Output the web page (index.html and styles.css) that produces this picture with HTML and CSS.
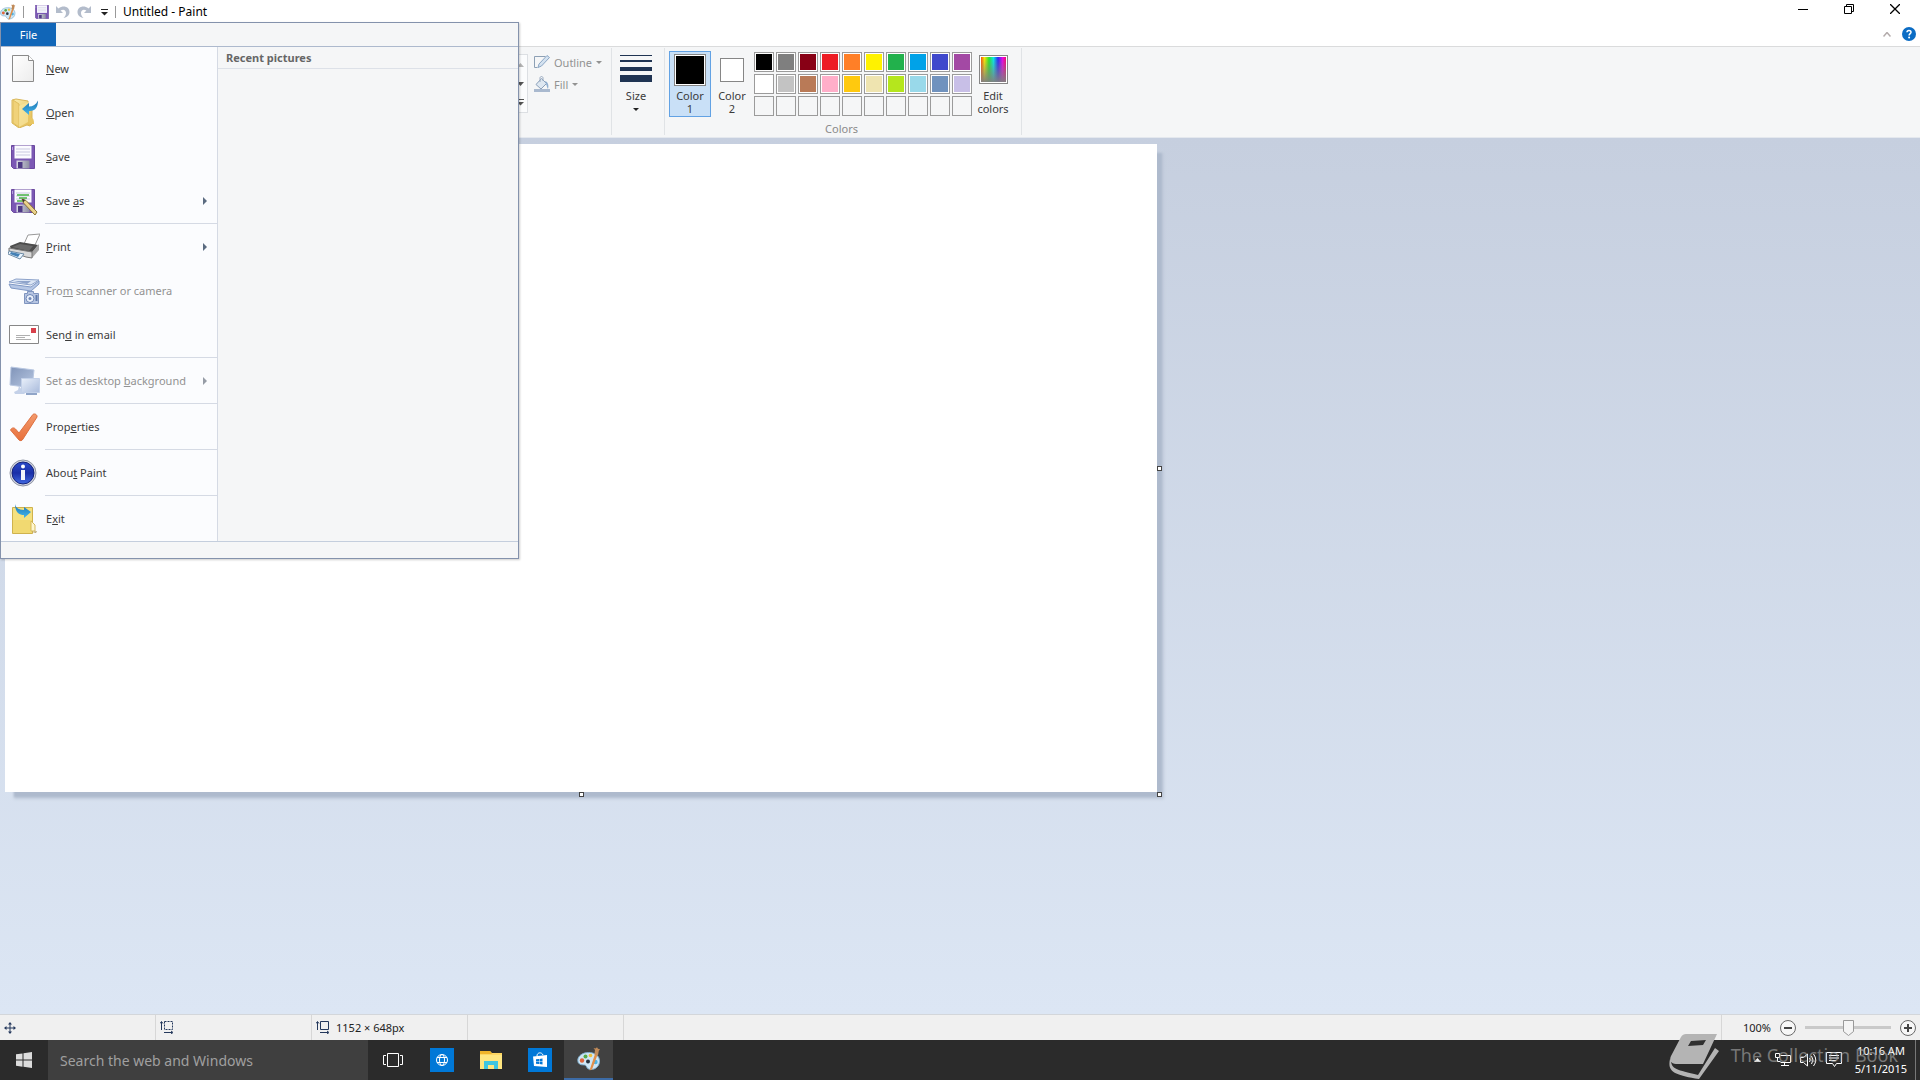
FILE: index.html
```html
<!DOCTYPE html>
<html lang="en">
<head>
    <meta charset="UTF-8">
    <meta name="viewport" content="width=device-width, initial-scale=1.0">
    <title>Untitled - Paint</title>
    <link rel="stylesheet" href="styles.css">
</head>
<body>
    <!-- Shared icon shapes -->
    <svg class="defs" width="0" height="0" aria-hidden="true">
        <defs>
            <linearGradient id="folderFill" x1="0" y1="0" x2="1" y2="1">
                <stop offset="0" stop-color="#fbeeb0"/>
                <stop offset="1" stop-color="#e2b94c"/>
            </linearGradient>
            <linearGradient id="blueArrow" x1="0" y1="0" x2="0" y2="1">
                <stop offset="0" stop-color="#1c74b4"/>
                <stop offset="1" stop-color="#43b6ea"/>
            </linearGradient>
            <linearGradient id="paperFill" x1="0" y1="0" x2="1" y2="1">
                <stop offset="0" stop-color="#ffffff"/>
                <stop offset="1" stop-color="#ececec"/>
            </linearGradient>
            <linearGradient id="metalFill" x1="0" y1="0" x2="1" y2="0">
                <stop offset="0" stop-color="#d9d9e4"/>
                <stop offset="1" stop-color="#8d8da3"/>
            </linearGradient>
            <linearGradient id="screenFill" x1="0" y1="0" x2="1" y2="1">
                <stop offset="0" stop-color="#7f93b8"/>
                <stop offset="1" stop-color="#b8c8e2"/>
            </linearGradient>
            <linearGradient id="paleFill" x1="0" y1="0" x2="1" y2="1">
                <stop offset="0" stop-color="#e9f0fa"/>
                <stop offset="1" stop-color="#a9bbdc"/>
            </linearGradient>
            <linearGradient id="tickFill" x1="0" y1="0" x2="0" y2="1">
                <stop offset="0" stop-color="#f39a6c"/>
                <stop offset="1" stop-color="#e8703c"/>
            </linearGradient>
            <linearGradient id="infoFill" x1="0" y1="0" x2="0" y2="1">
                <stop offset="0" stop-color="#2b4bc9"/>
                <stop offset="0.5" stop-color="#1a2fa8"/>
                <stop offset="1" stop-color="#3f68e0"/>
            </linearGradient>
            <symbol id="floppy" viewBox="0 0 24 24">
                <path d="M0.5 0.5h23v23h-21l-2-2z" fill="#7b58b4" stroke="#6a489f"/>
                <path d="M3.5 0.5h17v13h-17z" fill="#fbfbff"/>
                <path d="M5 4h14M5 7h14M5 10h14" stroke="#c9c9e0"/>
                <path d="M5.500 15.500h13v8h-13z" fill="url(#metalFill)"/>
                <path d="M7 17h4.500v6H7z" fill="#4f3b86"/>
                <path d="M1.500 2v3" stroke="#b79fe0"/>
            </symbol>
            <symbol id="palette" viewBox="0 0 24 24">
                <path d="M11.500 5.500c6 0 11 3 11 8.500 0 5-4 8.500-8.500 8.500-2.500 0-4-1.200-4.500-2.800-.4-1.400-1.500-1.800-3-1.800C3 18 .800 16.500 .800 13.500 .800 9 5.500 5.500 11.500 5.500z" fill="#cfe6f5" stroke="#7fb0d0"/>
                <circle cx="5" cy="13.500" r="2.200" fill="#e0663c"/>
                <circle cx="8.500" cy="9.500" r="2" fill="#54ab4a"/>
                <circle cx="13.500" cy="8.500" r="1.800" fill="#efc03c"/>
                <circle cx="18.500" cy="15" r="2.200" fill="#4fb2e0"/>
                <circle cx="11" cy="14.500" r="2" fill="#27313d"/>
                <path d="M12.500 23.500L18 7l2.500 .8L15 22.500z" fill="#e08f4a"/>
                <path d="M17.400 7.500L18 3l-1.500-2 2 .5L20 .3l1 1.400 2 .5-1.200 1.500-.8 4.500z" fill="#c08a58"/>
            </symbol>
        </defs>
    </svg>

    <div class="window">
        <!-- Title bar -->
        <header class="titlebar">
            <svg class="app-icon" width="16" height="16"><use href="#palette"/></svg>
            <span class="bar-line"></span>
            <button class="quick" aria-label="Save"><svg width="14" height="14"><use href="#floppy"/></svg></button>
            <button class="quick" aria-label="Undo">
                <svg width="14" height="14" viewBox="0 0 14 14"><path d="M0 1v7h7L4.600 5.600C7.500 3.800 10 5.200 10 8c0 2-1 3.600-2.500 5C11 12.500 13.500 10.300 13.500 7 13.500 2 7.500-.3 2.500 3.500z" fill="#b3bccb"/></svg>
            </button>
            <button class="quick" aria-label="Redo">
                <svg width="14" height="14" viewBox="0 0 14 14"><path d="M14 1v7H7l2.400-2.400C6.500 3.800 4 5.200 4 8c0 2 1 3.600 2.500 5C3 12.500 .5 10.300 .5 7 .5 2 6.500-.3 11.500 3.500z" fill="#b3bccb"/></svg>
            </button>
            <button class="quick" aria-label="Customize Quick Access Toolbar">
                <svg width="7" height="7"><path d="M0 .5h7" stroke="#222"/><path d="M0 3h7L3.500 6.500z" fill="#222"/></svg>
            </button>
            <span class="bar-line"></span>
            <h1>Untitled - Paint</h1>
            <div class="window-buttons">
                <button aria-label="Minimize"><svg width="10" height="10"><path d="M0 5.500h10" stroke="#000"/></svg></button>
                <button aria-label="Restore"><svg width="10" height="10"><path d="M.5 2.500h7v7h-7zM2.500 2.500v-2h7v7h-2" fill="none" stroke="#000"/></svg></button>
                <button aria-label="Close"><svg width="10" height="10"><path d="M0 0l10 10M10 0L0 10" stroke="#000" stroke-width="1.300"/></svg></button>
            </div>
        </header>

        <div class="tab-row">
            <button aria-label="Minimize the Ribbon"><svg width="8" height="5"><path d="M.5 4.500l3.500-4 3.500 4" fill="none" stroke="#b3abab" stroke-width="1.500"/></svg></button>
            <button aria-label="Help">
                <svg width="14" height="14" viewBox="0 0 14 14"><circle cx="7" cy="7" r="7" fill="#0b6cc4"/><path d="M5 5.300C5 2.800 9 2.800 9 5.200c0 1.500-1.900 1.500-1.900 3.300" fill="none" stroke="#fff" stroke-width="1.500"/><circle cx="7.100" cy="10.600" r="1" fill="#fff"/></svg>
            </button>
        </div>

        <!-- Ribbon -->
        <section class="ribbon">
            <div class="shapes">
                <div class="gallery-scroll">
                    <button class="faded" aria-label="Row up"><svg width="7" height="4"><path d="M0 4l3.500-4L7 4z" fill="#b5b5b5"/></svg></button>
                    <button aria-label="Row down"><svg width="7" height="4"><path d="M0 0h7L3.500 4z" fill="#555"/></svg></button>
                    <button aria-label="More shapes"><svg width="7" height="7"><path d="M0 .5h7" stroke="#555"/><path d="M0 3h7L3.500 6.500z" fill="#555"/></svg></button>
                </div>
            </div>
            <div class="shape-style">
                <button disabled>
                    <svg width="16" height="14" viewBox="0 0 16 14"><path d="M.5 1.500h11M.5 1.500v11h3" fill="none" stroke="#8da0b5"/><path d="M4 12.500L5 9l8-8.500 2.500 2L7.500 11z" fill="#d4e2f0" stroke="#8ba6c4"/></svg>
                    Outline <i class="caret"></i>
                </button>
                <button disabled>
                    <svg width="16" height="16" viewBox="0 0 16 16"><path d="M0 13h16v3H0z" fill="#a9b9cf"/><path d="M2 8.500L7.500 2.500l5 5-5.500 5.500z" fill="#dde7f1" stroke="#8ba0ba"/><path d="M6 6V2c0-2 3-2 3 0v3" fill="none" stroke="#9aabc0"/><path d="M11 5c3 1 4 4 3 8-1-1-1-3-2-5z" fill="#8faed0"/></svg>
                    Fill <i class="caret"></i>
                </button>
            </div>
            <div class="group size-group">
                <button class="tool">
                    <svg width="32" height="28"><path d="M0 0h32v1H0zM0 5h32v2H0zM0 12h32v4H0zM0 20h32v7H0z" fill="#1f3453"/></svg>
                    <span>Size</span>
                    <i class="caret"></i>
                </button>
            </div>
            <div class="group colors-group">
                <div class="colors-row">
                    <button class="tool color-tool selected"><span class="swatch swatch-primary"></span><span>Color<br>1</span></button>
                    <button class="tool color-tool"><span class="swatch swatch-secondary"></span><span>Color<br>2</span></button>
                    <div class="palette" id="palette-grid"></div>
                    <button class="tool edit-tool"><span class="swatch swatch-spectrum"></span><span>Edit<br>colors</span></button>
                </div>
                <div class="group-label">Colors</div>
            </div>
        </section>

        <!-- Drawing area -->
        <main class="workspace">
            <div class="canvas">
                <span class="handle handle-right"></span>
                <span class="handle handle-bottom"></span>
                <span class="handle handle-corner"></span>
            </div>
        </main>

        <!-- Status bar -->
        <footer class="statusbar">
            <div class="status-cell"><svg width="12" height="12"><path d="M6 1v10M1 6h10" stroke="#24385c"/><path d="M4 2.500L6 0l2 2.500zM4 9.500L6 12l2-2.500zM2.500 4L0 6l2.500 2zM9.500 4L12 6 9.500 8z" fill="#24385c"/></svg></div>
            <div class="status-cell"><svg width="14" height="13"><path d="M4.500 .5h8v8h-8z" fill="none" stroke="#24385c" stroke-dasharray="2 1"/><path d="M1.500 1v8M0 2.500L1.500 .5 3 2.500M4 11.500h8M11 10l2 1.500-2 1.500" fill="none" stroke="#24385c"/></svg></div>
            <div class="status-cell"><svg width="14" height="13"><path d="M4.500 .5h8v8h-8z" fill="none" stroke="#24385c"/><path d="M1.500 1v8M0 2.500L1.500 .5 3 2.500M4 11.500h8M11 10l2 1.500-2 1.500" fill="none" stroke="#24385c"/></svg>1152 × 648px</div>
            <div class="status-cell"></div>
            <div class="zoom">
                <label for="zoom">100%</label>
                <button aria-label="Zoom out"><svg width="16" height="16"><circle cx="8" cy="8" r="7.500" fill="#f7f7f7" stroke="#6a6a6a"/><path d="M4 8h8" stroke="#444" stroke-width="2"/></svg></button>
                <input type="range" id="zoom" min="0" max="100" value="50">
                <button aria-label="Zoom in"><svg width="16" height="16"><circle cx="8" cy="8" r="7.500" fill="#f7f7f7" stroke="#6a6a6a"/><path d="M4 8h8M8 4v8" stroke="#444" stroke-width="2"/></svg></button>
            </div>
        </footer>

        <!-- File menu -->
        <div class="file-menu">
            <div class="file-tabs"><button class="file-tab">File</button></div>
            <div class="file-body">
                <nav class="commands">
                    <button>
                        <svg width="30" height="30"><path d="M4.500 1.500h16l5 5v21h-21z" fill="url(#paperFill)" stroke="#8a8a8a"/><path d="M20.500 1.500v5h5" fill="#fff" stroke="#8a8a8a"/></svg>
                        <span><u>N</u>ew</span>
                    </button>
                    <button>
                        <svg width="30" height="30"><path d="M4 2l4-1 12 2v6l4 3v14l-2 2-3-1-8 3-7-5z" fill="url(#folderFill)" stroke="#d9b659"/><path d="M5 2l6 4v23l-6-4z" fill="#f0d27a" stroke="#dfbd5c"/><path d="M11 8l9-4v20l-9 5z" fill="#f8e6a0" opacity=".7"/><path d="M21 20c4-1 5 1 5 6h-5z" fill="#e8c662"/><path d="M14 11l7-6v3.500c4 0 7-2 9-6 0 7-3 11-9 10.500V17z" fill="url(#blueArrow)"/></svg>
                        <span><u>O</u>pen</span>
                    </button>
                    <button>
                        <svg width="30" height="30"><use href="#floppy" x="3" y="3" width="24" height="24"/></svg>
                        <span><u>S</u>ave</span>
                    </button>
                    <button>
                        <svg width="30" height="30"><use href="#floppy" x="3" y="3" width="24" height="24"/><path d="M9 9h12M11 12h8M9 15h7" stroke="#45b243" stroke-width="1.500"/><path d="M14 13l4 1.500L29 26l-2 3L15.500 17z" fill="#ecd38c" stroke="#8b7434"/><path d="M14 13l3 1-1.500 2.500z" fill="#333"/></svg>
                        <span>Save <u>a</u>s</span><i class="more"></i>
                    </button>
                    <hr>
                    <button>
                        <svg width="32" height="30"><path d="M20 3l12-1-5 11-11-1z" fill="#fff" stroke="#999"/><path d="M2 14l10-4 18 3-6 8-21-3z" fill="#4c4c4c"/><path d="M4 15l8-3 13 2-4 5z" fill="#6a6a6a"/><path d="M24 20l7-8v6l-7 8z" fill="#a5a5a5"/><path d="M1 16l23 4v6l-6-1-17-6z" fill="#d8d8d8" stroke="#777"/><path d="M1 19l15 3-4 5-12-5z" fill="#eaf5ff" stroke="#6c8aa5"/><path d="M3 20l9 2-2 3-8-3z" fill="#4380b5"/></svg>
                        <span><u>P</u>rint</span><i class="more"></i>
                    </button>
                    <button disabled>
                        <svg width="32" height="30"><path d="M1 6l7-3 23 1-8 5z" fill="#dce6f5" stroke="#8ca2ca"/><path d="M1 8l22 3 8-6v3l-8 7L3 12z" fill="#b6c7e5" stroke="#7f98c5"/><path d="M6 5h17l-4 3z" fill="#8fa4cb"/><path d="M16.500 17.500h3v-2h6v2h5v10h-14z" fill="#b6c5e2" stroke="#7f94be"/><circle cx="22" cy="22.500" r="4" fill="#eaf0fa" stroke="#6e86b6"/><circle cx="22" cy="22.500" r="1.500" fill="#6e86b6"/><path d="M28.500 19v6" stroke="#5f78aa" stroke-width="2"/></svg>
                        <span>Fro<u>m</u> scanner or camera</span>
                    </button>
                    <button>
                        <svg width="32" height="30"><path d="M1.500 5.500h29v18h-29z" fill="#fff" stroke="#878787"/><path d="M23 8h5v5h-5z" fill="#d8414c"/><path d="M8 15.500h14M8 17.500h9M8 19.500h15" stroke="#b0b0b0"/></svg>
                        <span>Sen<u>d</u> in email</span>
                    </button>
                    <hr>
                    <button disabled>
                        <svg width="32" height="30"><path d="M3 1l23 3-2 18-22-3z" fill="url(#screenFill)" stroke="#b9c8e2"/><path d="M11 20l-1 4-4 2 1 2h10" fill="#c4d1e8"/><path d="M13.500 12.500h18v14h-18z" fill="url(#paleFill)" stroke="#c3d1e9"/><path d="M18 27h11v2H18z" fill="#90a5c8"/></svg>
                        <span>Set as desktop <u>b</u>ackground</span><i class="more"></i>
                    </button>
                    <hr>
                    <button>
                        <svg width="32" height="30"><path d="M2.500 18c1-2 3-3 5-1l3.500 4L24.500 3c1-2 5-1 4.500 2L15 27c-1 2-3 2-4 1z" fill="url(#tickFill)" stroke="#dd7040"/></svg>
                        <span>Prop<u>e</u>rties</span>
                    </button>
                    <hr>
                    <button>
                        <svg width="30" height="30"><circle cx="15" cy="15" r="13" fill="#d4d7e0" stroke="#8f94a5"/><circle cx="15" cy="15" r="11" fill="url(#infoFill)" stroke="#15237a"/><circle cx="15" cy="8.500" r="2" fill="#fff"/><path d="M13 12h4v10h-4z" fill="#f2f4fb"/></svg>
                        <span>Abou<u>t</u> Paint</span>
                    </button>
                    <hr>
                    <button>
                        <svg width="30" height="30"><path d="M4.500 3.500h20v26h-20z" fill="#f5e17f" stroke="#cfb24d"/><path d="M5 16h19v13H5z" fill="#efd468" opacity=".6"/><path d="M23 17l4 4v6h-4z" fill="#fff7cf" stroke="#d5b95c"/><path d="M24 28l5-1-1 2z" fill="#b8a36c"/><path d="M7 0c1 4 4 6 9 6V3l7 5-7 6v-3c-6 0-9-4-9-11z" fill="url(#blueArrow)"/></svg>
                        <span>E<u>x</u>it</span>
                    </button>
                </nav>
                <section class="recent">
                    <h2>Recent pictures</h2>
                </section>
            </div>
            <div class="file-footer"></div>
        </div>
    </div>

    <!-- Taskbar -->
    <div class="taskbar">
        <button class="start" aria-label="Start"><svg width="16" height="16"><path d="M0 2.300L6.500 1.400v6.200H0zM7.500 1.200L16 0v7.600H7.500zM0 8.500h6.500v6.200L0 13.800zM7.500 8.500H16V16l-8.500-1.200z" fill="#dcdcdc"/></svg></button>
        <input class="search" type="text" aria-label="Search" placeholder="Search the web and Windows">
        <button class="task" aria-label="Task View"><svg width="20" height="14"><path d="M4.500 .5h11v13h-11zM3 2.500H.5v9H3M17 2.500h2.500v9H17" fill="none" stroke="#fff"/></svg></button>
        <button class="task" aria-label="Browser"><svg width="24" height="24"><path d="M0 0h24v24H0z" fill="#0078d7"/><g fill="none" stroke="#fff"><circle cx="12" cy="12" r="5.500"/><ellipse cx="12" cy="12" rx="2.500" ry="5.500"/><path d="M7 9.500h10M7 14.500h10"/></g></svg></button>
        <button class="task" aria-label="File Explorer"><svg width="22" height="20"><path d="M0 1h10l2 2h10v16H0z" fill="#fdd663"/><path d="M0 1h10l2 3H0z" fill="#f0b429"/><path d="M0 5h22v14H0z" fill="#ffe680"/><path d="M4 11h14v8h-4v-4H8v4H4z" fill="#3fc6e0"/></svg></button>
        <button class="task" aria-label="Store"><svg width="24" height="24"><path d="M0 0h24v24H0z" fill="#0078d7"/><path d="M5 8.500l14-1.500v12L6 18z" fill="#fff"/><path d="M9 8c0-4 5-4 6-1" fill="none" stroke="#fff"/><path d="M8 11.300l3-.3v2.300H8zM11.500 11l3-.4v2.700h-3zM8 13.700h3V16l-3-.3zM11.500 13.700h3v2.700l-3-.3z" fill="#0078d7"/></svg></button>
        <button class="task active" aria-label="Paint"><svg width="24" height="24"><use href="#palette"/></svg></button>
        <div class="tray">
            <button class="tray-more" aria-label="Show hidden icons"><svg width="7" height="4"><path d="M0 4l3.500-4L7 4z" fill="#fff"/></svg></button>
            <button aria-label="Network"><svg width="16" height="14"><path d="M5.500 2.500h10v7h-10M9.500 9.500v3M6 12.500h8M.5 .5h4v4h-4zM2.500 4.500v4h3" fill="none" stroke="#fff"/></svg></button>
            <button aria-label="Volume"><svg width="17" height="14"><path d="M.5 4.500h3L7.500 1v12L3.500 9.500h-3zM9.500 5q1.500 2 0 4M11.500 3q3 4 0 8M13.500 1q4.500 6 0 12" fill="none" stroke="#fff"/></svg></button>
            <button aria-label="Notifications"><svg width="16" height="16"><path d="M.5 .5h15v11h-5l-2 3-2-3h-6zM3 3.500h10M3 6h10M3 8.500h7" fill="none" stroke="#fff"/></svg></button>
            <time class="clock">10:16 AM<br>5/11/2015</time>
        </div>
        <div class="watermark">
            <svg width="50" height="46" viewBox="0 0 50 46"><path d="M17 1h31L34 31H7C2 31 0 27 2 23L12 4c1-2 3-3 5-3z" fill="#b4b4b4"/><path d="M22 8l15-1-3 5-15 1z" fill="#303030"/><path d="M2 27c0 9 6 10 27 15l17-27 4 3-20 28C6 42-2 39 1 26z" fill="#b4b4b4"/></svg>
            <span>The Collection Book</span>
        </div>
    </div>

    <script>
        const colors = [
            "#000000", "#7f7f7f", "#880015", "#ed1c24", "#ff7f27", "#fff200", "#22b14c", "#00a2e8", "#3f48cc", "#a349a4",
            "#ffffff", "#c3c3c3", "#b97a57", "#ffaec9", "#ffc90e", "#efe4b0", "#b5e61d", "#99d9ea", "#7092be", "#c8bfe7"
        ];
        const grid = document.getElementById("palette-grid");

        // Two rows of preset colors and one row of empty slots
        for (let i = 0; i < 30; i++) {
            const cell = document.createElement("button");
            cell.className = i < 20 ? "color" : "color empty";
            cell.setAttribute("aria-label", colors[i] || "Custom color");
            if (colors[i]) {
                cell.style.backgroundColor = colors[i];
            }
            grid.appendChild(cell);
        }
    </script>
</body>
</html>
```
FILE: styles.css
```css
* {
    box-sizing: border-box;
}

body {
    margin: 0;
    height: 100vh;
    display: flex;
    flex-direction: column;
    overflow: hidden;
    font-family: "Noto Sans", "Open Sans", sans-serif;
    font-size: 11px;
    line-height: 13px;
    color: #3b3b3b;
}

button {
    display: flex;
    align-items: center;
    justify-content: center;
    padding: 0;
    border: none;
    background: none;
    font: inherit;
    color: inherit;
}

svg {
    display: block;
    flex: none;
}

.defs {
    position: absolute;
}

.window {
    position: relative;
    flex: 1;
    min-height: 0;
    display: flex;
    flex-direction: column;
    background: #fff;
}

/* Title bar */
.titlebar {
    height: 22px;
    display: flex;
    align-items: center;
    flex: none;
    padding-top: 2px;
}

.titlebar h1 {
    margin: 0;
    font-size: 12px;
    line-height: 20px;
    font-weight: normal;
    color: #000;
}

.bar-line {
    width: 1px;
    height: 12px;
    margin: 0 7px;
    background: #999;
}

.quick {
    width: 21px;
    height: 20px;
}

.quick + .bar-line {
    margin-left: 0;
}

.window-buttons {
    display: flex;
    align-self: flex-start;
    margin-left: auto;
    padding-right: 2px;
}

.window-buttons button {
    width: 46px;
    height: 14px;
}

.tab-row {
    height: 24px;
    flex: none;
    display: flex;
    justify-content: flex-end;
    align-items: center;
    gap: 11px;
    padding-right: 4px;
}

/* Ribbon */
.ribbon {
    height: 92px;
    flex: none;
    display: flex;
    background: #f5f6f7;
    border-top: 1px solid #dadbdc;
    border-bottom: 1px solid #e4e8ee;
}

.shapes {
    width: 528px;
    display: flex;
    justify-content: flex-end;
    align-items: flex-start;
    padding-top: 7px;
}

.gallery-scroll {
    width: 15px;
    border: 1px solid #dcdfe3;
    background: #fbfcfd;
}

.gallery-scroll button {
    width: 13px;
    height: 19px;
}

.shape-style {
    width: 83px;
    padding: 4px 0 0 6px;
}

.shape-style button {
    height: 22px;
    gap: 4px;
    color: #929292;
}

.caret {
    border: 3px solid transparent;
    border-top-color: currentColor;
    border-bottom: 0;
}

.group {
    border-left: 1px solid #e0e3e6;
    margin: 1px 0 2px;
}

.size-group {
    width: 53px;
    padding: 7px 8px;
}

.tool {
    flex-direction: column;
    justify-content: flex-start;
}

.size-group .tool {
    width: 32px;
    gap: 6px;
}

.size-group .caret {
    color: #222;
}

.colors-group {
    border-right: 1px solid #e0e3e6;
    padding: 3px 7px 0 4px;
}

.colors-row {
    display: flex;
    height: 66px;
}

.color-tool {
    width: 42px;
    height: 66px;
    padding: 2px 0 1px;
    justify-content: space-between;
    border: 1px solid transparent;
}

.color-tool.selected {
    background: #c9e0f7;
    border-color: #62a2e4;
}

.swatch {
    display: block;
    border: 1px solid #868686;
    background: #fff;
}

.swatch-primary {
    width: 32px;
    height: 32px;
    background: #000;
    box-shadow: inset 0 0 0 1px #fff;
}

.swatch-secondary {
    width: 24px;
    height: 24px;
    margin-top: 4px;
}

.swatch-spectrum {
    width: 29px;
    height: 29px;
    background:
        linear-gradient(to bottom, transparent, #808080),
        linear-gradient(to right, #f20, #fe0, #2e2, #0ee, #22f, #e0e, #f04);
    box-shadow: inset 0 0 0 1px #fff;
}

.palette {
    display: grid;
    grid-template-columns: repeat(10, 20px);
    grid-auto-rows: 20px;
    gap: 2px;
    padding: 1px 0 0 1px;
}

.color {
    border: 1px solid #9b9b9b;
    box-shadow: inset 0 0 0 1px #fff;
}

.color.empty {
    box-shadow: none;
}

.edit-tool {
    width: 42px;
    padding-top: 4px;
    gap: 5px;
}

.group-label {
    padding-top: 5px;
    text-align: center;
    color: #8b8b8b;
}

/* Drawing area */
.workspace {
    flex: 1;
    min-height: 0;
    padding: 6px 5px;
    background: linear-gradient(#c6cfdf, #dce6f4);
}

.canvas {
    position: relative;
    width: 1152px;
    height: 648px;
    background: #fff;
    box-shadow: 7px 7px 2px -2px #aebacd, 8px 8px 3px -1px #c0cada;
}

.handle {
    position: absolute;
    width: 5px;
    height: 5px;
    border: 1px solid #444;
    background: #fff;
}

.handle-right {
    left: 100%;
    top: 50%;
    margin-top: -2px;
}

.handle-bottom {
    left: 50%;
    top: 100%;
    margin-left: -2px;
}

.handle-corner {
    left: 100%;
    top: 100%;
}

/* Status bar */
.statusbar {
    height: 26px;
    flex: none;
    display: flex;
    align-items: stretch;
    border-top: 1px solid #d3d6da;
    background: #f0f0f0;
    color: #222;
}

.status-cell {
    width: 156px;
    display: flex;
    align-items: center;
    gap: 6px;
    padding-left: 4px;
    border-right: 1px solid #d7d7d7;
}

.zoom {
    display: flex;
    align-items: center;
    gap: 9px;
    margin-left: auto;
    padding: 0 4px 0 21px;
    border-left: 1px solid #d7d7d7;
}

.zoom input {
    width: 86px;
    height: 18px;
    margin: 0;
    appearance: none;
    background: linear-gradient(#c9c9c9, #c9c9c9) center / 100% 3px no-repeat;
}

.zoom input::-webkit-slider-thumb {
    appearance: none;
    width: 11px;
    height: 16px;
    background: url("data:image/svg+xml,%3Csvg xmlns='http://www.w3.org/2000/svg' width='11' height='16'%3E%3Cpath d='M.5.5h10v11l-5 4-5-4z' fill='%23f4f4f4' stroke='%23999'/%3E%3C/svg%3E");
}

/* File menu */
.file-menu {
    position: absolute;
    top: 22px;
    left: 0;
    width: 519px;
    border: 1px solid #8492ac;
    background: #f5f6f7;
    box-shadow: 1px 1px 2px rgba(0, 0, 0, 0.2);
}

.file-tabs {
    height: 24px;
    border-bottom: 1px solid #adb9cd;
}

.file-tab {
    width: 55px;
    height: 23px;
    background: #1166b8;
    color: #fff;
}

.file-body {
    display: flex;
}

.commands {
    width: 217px;
    border-right: 1px solid #d5dae4;
    background: #fbfcfe;
}

.commands button {
    width: 100%;
    height: 44px;
    justify-content: flex-start;
    padding: 0 10px 0 7px;
}

.commands svg {
    width: 32px;
    margin-right: 6px;
}

.commands span {
    padding-bottom: 2px;
}

.commands button:disabled {
    color: #929292;
}

.commands hr {
    height: 2px;
    margin: 0 0 0 44px;
    border: none;
    border-top: 1px solid #d5dae4;
}

.more {
    margin-left: auto;
    border: 4px solid transparent;
    border-left-color: #5b6b80;
    border-right: 0;
}

.commands button:disabled .more {
    border-left-color: #969ca6;
}

.recent {
    flex: 1;
}

.recent h2 {
    margin: 0;
    padding: 0 8px;
    border-bottom: 1px solid #dde1e8;
    font-size: 11px;
    line-height: 21px;
    color: #666;
}

.file-footer {
    height: 17px;
    border-top: 1px solid #c4cedd;
}

/* Taskbar */
.taskbar {
    position: relative;
    height: 40px;
    flex: none;
    display: flex;
    background: #2b2b2b;
}

.start {
    width: 48px;
}

.task {
    width: 49px;
}

.task.active {
    background: #414141;
    border-bottom: 2px solid #3c6ba6;
}

.search {
    width: 320px;
    padding: 0 12px;
    border: none;
    background: #3f3f3f;
    font-family: inherit;
    font-size: 14px;
    color: #fff;
}

.search::placeholder {
    color: #a0a0a0;
}

.tray {
    display: flex;
    align-items: center;
    gap: 9px;
    margin-left: auto;
    margin-right: 4px;
    padding-right: 8px;
    border-right: 1px solid #777;
    color: #fff;
}

.tray-more {
    margin-right: 5px;
}

.clock {
    margin-left: 4px;
    line-height: 18px;
    text-align: center;
}

.watermark {
    position: absolute;
    right: 22px;
    bottom: 1px;
    display: flex;
    align-items: center;
    gap: 12px;
    font-size: 18px;
    line-height: 24px;
    color: #aaa;
    pointer-events: none;
}

.watermark span {
    padding-bottom: 2px;
    opacity: 0.6;
}
```
